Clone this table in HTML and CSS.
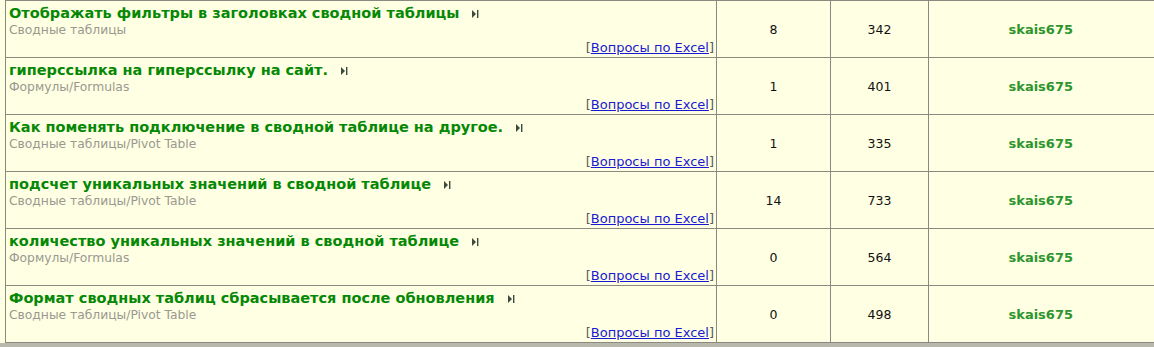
FILE: index.html
```html
<!DOCTYPE html>
<html lang="ru">
<head>
<meta charset="utf-8">
<title>Темы форума</title>
<link rel="stylesheet" href="styles.css">
</head>
<body>
<div class="page">
  <table class="topics">
    <colgroup>
      <col class="c-topic"><col class="c-replies"><col class="c-views"><col class="c-author">
    </colgroup>
    <tbody>
      <tr>
        <td class="topic">
          <div class="title"><a href="#">Отображать фильтры в заголовках сводной таблицы</a><svg class="last" viewBox="0 0 7 8" width="7" height="8"><polygon points="0,0 4,4 0,8"/><rect x="5" y="0" width="1.4" height="8"/></svg></div>
          <div class="cat">Сводные таблицы</div>
          <div class="forum">[<a href="#">Вопросы по Excel</a>]</div>
        </td>
        <td class="num">8</td>
        <td class="num">342</td>
        <td class="author">skais675</td>
      </tr>
      <tr>
        <td class="topic">
          <div class="title"><a href="#">гиперссылка на гиперссылку на сайт.</a><svg class="last" viewBox="0 0 7 8" width="7" height="8"><polygon points="0,0 4,4 0,8"/><rect x="5" y="0" width="1.4" height="8"/></svg></div>
          <div class="cat">Формулы/Formulas</div>
          <div class="forum">[<a href="#">Вопросы по Excel</a>]</div>
        </td>
        <td class="num">1</td>
        <td class="num">401</td>
        <td class="author">skais675</td>
      </tr>
      <tr>
        <td class="topic">
          <div class="title"><a href="#">Как поменять подключение в сводной таблице на другое.</a><svg class="last" viewBox="0 0 7 8" width="7" height="8"><polygon points="0,0 4,4 0,8"/><rect x="5" y="0" width="1.4" height="8"/></svg></div>
          <div class="cat">Сводные таблицы/Pivot Table</div>
          <div class="forum">[<a href="#">Вопросы по Excel</a>]</div>
        </td>
        <td class="num">1</td>
        <td class="num">335</td>
        <td class="author">skais675</td>
      </tr>
      <tr>
        <td class="topic">
          <div class="title"><a href="#">подсчет уникальных значений в сводной таблице</a><svg class="last" viewBox="0 0 7 8" width="7" height="8"><polygon points="0,0 4,4 0,8"/><rect x="5" y="0" width="1.4" height="8"/></svg></div>
          <div class="cat">Сводные таблицы/Pivot Table</div>
          <div class="forum">[<a href="#">Вопросы по Excel</a>]</div>
        </td>
        <td class="num">14</td>
        <td class="num">733</td>
        <td class="author">skais675</td>
      </tr>
      <tr>
        <td class="topic">
          <div class="title"><a href="#">количество уникальных значений в сводной таблице</a><svg class="last" viewBox="0 0 7 8" width="7" height="8"><polygon points="0,0 4,4 0,8"/><rect x="5" y="0" width="1.4" height="8"/></svg></div>
          <div class="cat">Формулы/Formulas</div>
          <div class="forum">[<a href="#">Вопросы по Excel</a>]</div>
        </td>
        <td class="num">0</td>
        <td class="num">564</td>
        <td class="author">skais675</td>
      </tr>
      <tr>
        <td class="topic">
          <div class="title"><a href="#">Формат сводных таблиц сбрасывается после обновления</a><svg class="last" viewBox="0 0 7 8" width="7" height="8"><polygon points="0,0 4,4 0,8"/><rect x="5" y="0" width="1.4" height="8"/></svg></div>
          <div class="cat">Сводные таблицы/Pivot Table</div>
          <div class="forum">[<a href="#">Вопросы по Excel</a>]</div>
        </td>
        <td class="num">0</td>
        <td class="num">498</td>
        <td class="author">skais675</td>
      </tr>
    </tbody>
  </table>
  <div class="footer-bar"></div>
</div>
</body>
</html>
```
FILE: styles.css
```css
html, body {
  margin: 0;
  padding: 0;
  background: #ffffe3;
}

body {
  font-family: "DejaVu Sans", Verdana, sans-serif;
  overflow: hidden;
}

.page {
  padding-left: 5px;
}

.topics {
  width: 1151px;
  border-collapse: collapse;
  table-layout: fixed;
  background: #ffffe3;
}

.c-topic { width: 711px; }
.c-replies { width: 114px; }
.c-views { width: 98px; }
.c-author { width: 228px; }

.topics td {
  border: 1px solid #8a8a80;
  height: 52px;
  padding: 2px 0;
  vertical-align: middle;
}

.topics td:last-child { border-right: none; }

.topics td.topic {
  padding: 3px 2px 1px 3px;
  vertical-align: top;
}

.title {
  font-size: 14.5px;
  font-weight: bold;
  line-height: 18px;
  white-space: nowrap;
}

.title a {
  color: #058805;
  text-decoration: none;
}

.last {
  margin-left: 13px;
  vertical-align: 0;
  fill: #3d4a3d;
}

.cat {
  font-size: 12.3px;
  line-height: 16px;
  color: #999990;
}

.forum {
  margin-top: 2px;
  font-size: 13px;
  line-height: 16px;
  text-align: right;
  color: #5a5a5a;
}

.forum a {
  color: #1a1ad0;
  text-decoration: underline;
}

.num {
  text-align: center;
  font-size: 12.5px;
  color: #111;
}

.author {
  text-align: center;
  font-size: 13px;
  font-weight: bold;
  color: #2e952e;
  padding-right: 4px !important;
}

.footer-bar {
  height: 5px;
  margin-left: -5px;
  background: #b8b8ac;
}
```
